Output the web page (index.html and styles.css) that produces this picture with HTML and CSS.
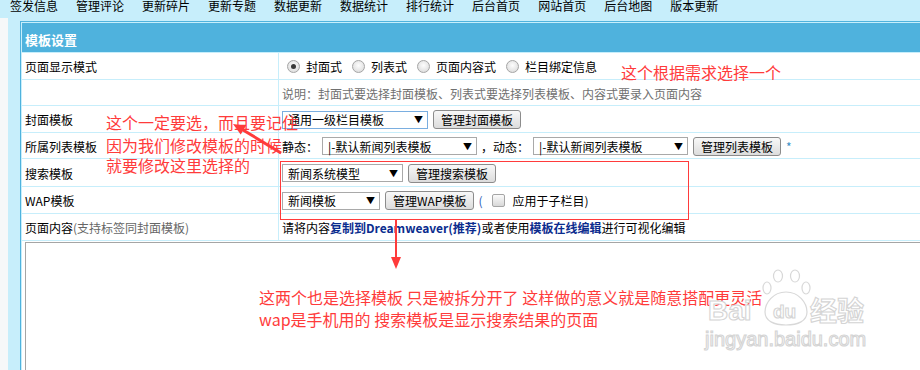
FILE: index.html
```html
<!DOCTYPE html>
<html lang="zh-CN">
<head>
    <meta charset="UTF-8">
    <meta name="viewport" content="width=device-width, initial-scale=1.0">
    <title>模板设置</title>
    <link rel="stylesheet" href="styles.css">
</head>
<body>
    <div class="topnav">
        <a>签发信息</a>
        <a>管理评论</a>
        <a>更新碎片</a>
        <a>更新专题</a>
        <a>数据更新</a>
        <a>数据统计</a>
        <a>排行统计</a>
        <a>后台首页</a>
        <a>网站首页</a>
        <a>后台地图</a>
        <a>版本更新</a>
    </div>

    <div class="main">
        <div class="gutter"></div>
        <div class="content">
            <table class="frame">
                <tr>
                    <th colspan="2">模板设置</th>
                </tr>
                <tr>
                    <td class="label">页面显示模式</td>
                    <td>
                        <div class="line">
                            <span class="opt"><i class="radio on"></i>封面式</span>
                            <span class="opt"><i class="radio"></i>列表式</span>
                            <span class="opt"><i class="radio"></i>页面内容式</span>
                            <span class="opt"><i class="radio"></i>栏目绑定信息</span>
                        </div>
                    </td>
                </tr>
                <tr class="short">
                    <td class="label"></td>
                    <td class="note">说明：封面式要选择封面模板、列表式要选择列表模板、内容式要录入页面内容</td>
                </tr>
                <tr>
                    <td class="label">封面模板</td>
                    <td>
                        <div class="line">
                            <span class="sel focus w146">通用一级栏目模板<b>▼</b></span>
                            <span class="btn">管理封面模板</span>
                        </div>
                    </td>
                </tr>
                <tr class="short">
                    <td class="label">所属列表模板</td>
                    <td>
                        <div class="line">
                            静态：<span class="sel w155 gap-l">|-默认新闻列表模板<b>▼</b></span>
                            <span class="sep">，动态：</span><span class="sel w155">|-默认新闻列表模板<b>▼</b></span>
                            <span class="btn">管理列表模板</span>
                            <span class="star">*</span>
                        </div>
                    </td>
                </tr>
                <tr class="tall">
                    <td class="label">搜索模板</td>
                    <td>
                        <div class="line">
                            <span class="sel w121">新闻系统模型<b>▼</b></span>
                            <span class="btn">管理搜索模板</span>
                        </div>
                    </td>
                </tr>
                <tr>
                    <td class="label">WAP模板</td>
                    <td>
                        <div class="line">
                            <span class="sel w98">新闻模板<b>▼</b></span>
                            <span class="btn">管理WAP模板</span>
                            <span class="paren">(</span><i class="check"></i>应用于子栏目)
                        </div>
                    </td>
                </tr>
                <tr>
                    <td class="label">页面内容<span class="muted">(支持标签同封面模板)</span></td>
                    <td>请将内容<b class="lnk">复制到Dreamweaver(推荐)</b>或者使用<b class="lnk">模板在线编辑</b>进行可视化编辑</td>
                </tr>
                <tr>
                    <td colspan="2" class="editor-cell"><div class="editor"></div></td>
                </tr>
            </table>
        </div>
    </div>

    <!-- annotations drawn over the screenshot -->
    <div class="mark mark-top">这个根据需求选择一个</div>
    <div class="mark mark-cover">这个一定要选，而且要记住</div>
    <div class="mark mark-cover2">因为我们修改模板的时候<br>就要修改这里选择的</div>
    <div class="mark mark-bottom">这两个也是选择模板 只是被拆分开了 这样做的意义就是随意搭配更灵活<br>wap是手机用的 搜索模板是显示搜索结果的页面</div>
    <div class="focus-box"></div>

    <svg class="arrows" width="920" height="370" viewBox="0 0 920 370">
        <line x1="281" y1="153" x2="243" y2="130" stroke="#ff3b3b" stroke-width="3"/>
        <polygon points="233,124 246,125.8 240.7,134.4" fill="#ff3b3b"/>
        <line x1="396" y1="219" x2="396" y2="259" stroke="#ff3b3b" stroke-width="2"/>
        <polygon points="391,257 401,257 396,269" fill="#ff3b3b"/>
    </svg>

    <svg class="watermark" width="175" height="92" viewBox="0 0 175 92">
        <g fill="none" stroke="#d8d8d8" stroke-width="1.2">
            <ellipse cx="67" cy="26" rx="4" ry="6"/>
            <ellipse cx="78" cy="14" rx="4.5" ry="6"/>
            <ellipse cx="95" cy="14" rx="4.5" ry="6"/>
            <ellipse cx="106" cy="26" rx="4" ry="6"/>
            <path d="M86 30 C73 30 65 41 65 50 C65 59 74 63 86 63 C98 63 107 59 107 50 C107 41 99 30 86 30 Z"/>
        </g>
        <g fill="#fff" stroke="#d4d4d4" stroke-width="1.1" font-family="Liberation Sans, Arial, sans-serif" font-weight="bold">
            <text x="8" y="58" font-size="28">Bai</text>
            <text x="73" y="56" font-size="19">du</text>
            <text x="110" y="59" font-size="27" font-family="Noto Sans CJK SC, sans-serif">经验</text>
            <text x="5" y="84" font-size="20" font-weight="normal">jingyan.baidu.com</text>
        </g>
    </svg>
</body>
</html>
```

FILE: styles.css
```css
body {
    margin: 0;
    background-color: #c7eefb;
    font-family: "Noto Sans CJK SC", sans-serif;
    font-size: 12px;
    color: #000;
    overflow: hidden;
}

.topnav {
    height: 18px;
    padding-left: 10px;
    display: flex;
    gap: 18px;
    line-height: 12px;
}

.main {
    display: flex;
}

.gutter {
    flex-shrink: 0;
    width: 8px;
    background-color: #f6f8f9;
}

.content {
    flex-shrink: 0;
    padding: 3px 0 0 12px;
}

.frame {
    width: 1000px;
    border: 1px solid #4fb2dd;
    border-spacing: 1px;
    background-color: #c7eefb;
}

.frame th {
    height: 29px;
    box-sizing: border-box;
    padding: 3px 3px 0;
    background-color: #4fb2dd;
    color: #fff;
    text-align: left;
    font-size: 13px;
    font-weight: bold;
}

.frame td {
    height: 26px;
    box-sizing: border-box;
    padding: 1px 3px 0;
    background-color: #fff;
    white-space: nowrap;
}

.frame td.label {
    width: 256px;
}

.frame tr.short td {
    height: 25px;
}

.frame tr.tall td {
    height: 27px;
}

.line {
    display: flex;
    align-items: center;
}

.opt {
    display: inline-flex;
    align-items: center;
    margin-right: 5px;
}

.radio {
    position: relative;
    width: 13px;
    height: 13px;
    box-sizing: border-box;
    margin: 0 6px 0 5px;
    border: 1px solid #a5a5a5;
    border-radius: 50%;
    background: radial-gradient(circle at 50% 40%, #fdfdfd, #d6d6d6);
}

.radio.on::after {
    content: "";
    position: absolute;
    left: 3px;
    top: 3px;
    width: 5px;
    height: 5px;
    border-radius: 50%;
    background-color: #3a3a3a;
}

.note {
    color: #707070;
}

.sel {
    display: inline-flex;
    align-items: center;
    justify-content: space-between;
    height: 18px;
    box-sizing: border-box;
    padding: 0 4px 0 5px;
    border: 1px solid #a9a9a9;
    background-color: #fff;
}

.sel b {
    font-size: 9px;
    font-weight: normal;
}

.sel.focus {
    border-color: #7aaee0;
}

.w146 { width: 146px; }
.w155 { width: 155px; }
.w121 { width: 121px; }
.w98 { width: 98px; }

.gap-l {
    margin-left: 4px;
}

.sep {
    margin: 0 4px;
}

.btn {
    display: inline-flex;
    align-items: center;
    height: 19px;
    box-sizing: border-box;
    margin-left: 5px;
    padding: 0 7px;
    border: 1px solid #8c8c8c;
    border-radius: 3px;
    background: linear-gradient(#f8f8f8, #dcdcdc);
}

.star {
    margin-left: 5px;
    color: #3b8fc6;
}

.paren {
    margin-left: 4px;
    color: #2a5cb8;
}

.check {
    width: 13px;
    height: 13px;
    box-sizing: border-box;
    margin: 0 8px 0 9px;
    border: 1px solid #a5a5a5;
    border-radius: 2px;
    background: linear-gradient(#fbfbfb, #d8d8d8);
}

.muted {
    color: #666;
}

.lnk {
    color: #0b2c8e;
}

.editor-cell {
    vertical-align: top;
    padding: 3px;
}

.editor {
    height: 200px;
    border: 1px solid #a5a5a5;
    background-color: #fff;
}

.mark {
    position: absolute;
    color: #ff3b3b;
    font-size: 16px;
    line-height: 16px;
    white-space: nowrap;
}

.mark-top {
    left: 621px;
    top: 64px;
}

.mark-cover {
    left: 106px;
    top: 114px;
}

.mark-cover2 {
    left: 106px;
    top: 135px;
    line-height: 20px;
}

.mark-bottom {
    left: 259px;
    top: 286px;
    line-height: 22px;
}

.focus-box {
    position: absolute;
    left: 280px;
    top: 161px;
    width: 409px;
    height: 59px;
    box-sizing: border-box;
    border: 1px solid #ff3b3b;
}

.arrows {
    position: absolute;
    left: 0;
    top: 0;
    pointer-events: none;
}

.watermark {
    position: absolute;
    left: 700px;
    top: 262px;
}
```
